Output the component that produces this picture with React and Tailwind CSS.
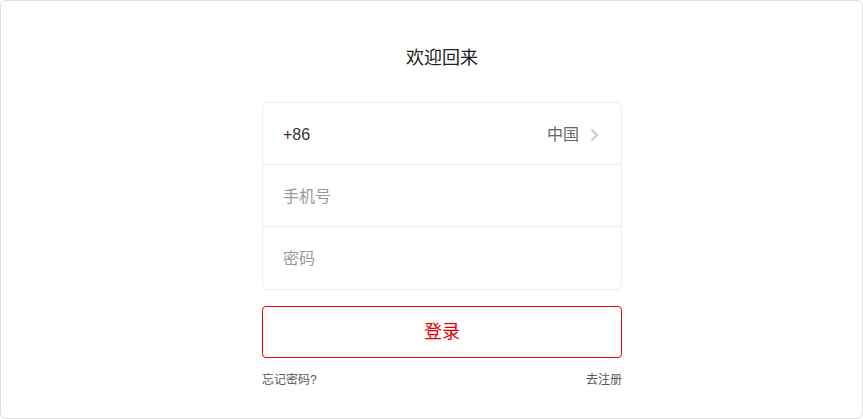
import React from "react";

export default function App() {
  return (
    <div className="w-[863px] h-[419px] bg-white" style={{ fontFamily: '"Liberation Sans", "Noto Sans CJK SC", sans-serif' }}>
      <div className="w-full h-full border border-[#dddddd] rounded-[6px] flex flex-col items-center box-border pl-[21px]">
        <div className="mt-[44px] h-[26px] text-[18px] leading-[26px] text-[#222]">欢迎回来</div>
        <div className="mt-[31px] w-[360px] border border-[#eeeeee] rounded-[4px] flex flex-col">
          <div className="h-[62px] flex items-center pl-[20px] pr-[22px] pt-[2px] border-b border-[#eeeeee]">
            <span className="text-[16px] text-[#333]">+86</span>
            <span className="ml-auto text-[16px] text-[#666]">中国</span>
            <svg width="9" height="14" viewBox="0 0 9 14" className="ml-[11px]">
              <path d="M1.5 1.5 L7 7 L1.5 12.5" fill="none" stroke="#cccccc" strokeWidth="2" />
            </svg>
          </div>
          <div className="h-[62px] flex items-center pl-[20px] pt-[2px] border-b border-[#eeeeee]">
            <span className="text-[16px] text-[#999]">手机号</span>
          </div>
          <div className="h-[62px] flex items-center pl-[20px] pt-[1px]">
            <span className="text-[16px] text-[#999]">密码</span>
          </div>
        </div>
        <button className="mt-[16px] w-[360px] h-[52px] border border-[#e60000] rounded-[4px] text-[18px] text-[#e60000] flex items-center justify-center bg-white">
          登录
        </button>
        <div className="mt-[13px] w-[360px] flex justify-between text-[12px] text-[#555] leading-[18px]">
          <span>忘记密码?</span>
          <span>去注册</span>
        </div>
      </div>
    </div>
  );
}
